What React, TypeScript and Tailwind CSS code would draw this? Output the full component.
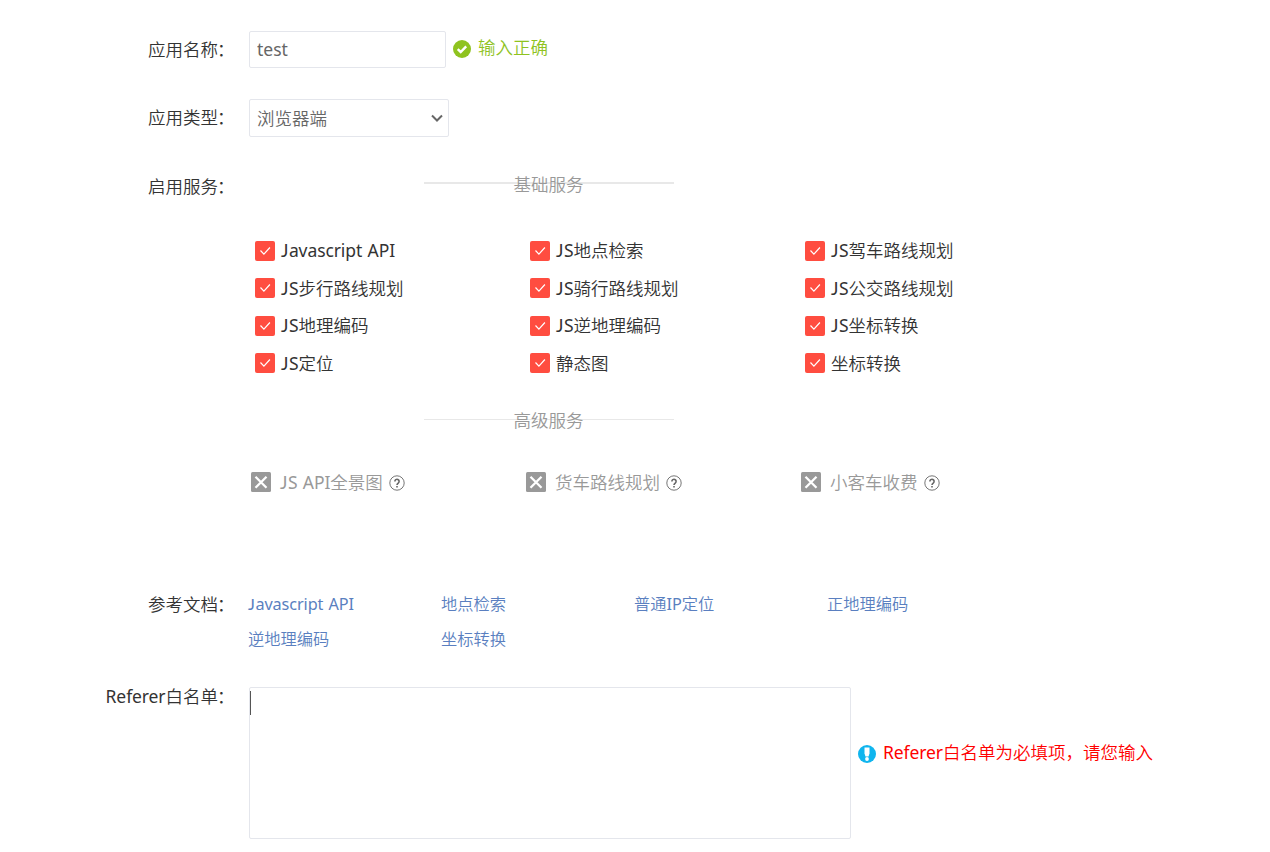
import type { ReactNode } from 'react'
import clsx from 'clsx'

const basicServices = [
    'Javascript API', 'JS地点检索', 'JS驾车路线规划',
    'JS步行路线规划', 'JS骑行路线规划', 'JS公交路线规划',
    'JS地理编码', 'JS逆地理编码', 'JS坐标转换',
    'JS定位', '静态图', '坐标转换',
]

const advancedServices = ['JS API全景图', '货车路线规划', '小客车收费']

const docs = ['Javascript API', '地点检索', '普通IP定位', '正地理编码', '逆地理编码', '坐标转换']

const partClass = (part: string) => {
    // The capital J of Noto Sans drops below the baseline, Lato's does not
    if (part === 'J') return 'mr-[0.5px] font-["Lato",sans-serif] font-normal leading-none'
    if (/[A-Za-z]/.test(part)) return 'font-normal tracking-[-0.1px]'
    return ''
}

function Text({ value }: { value: string }) {
    return (
        <span className={clsx('whitespace-pre', value.includes(' API') && '[word-spacing:1px]')}>
            {value.split(/(J|[A-IK-Za-z ]+)/).filter(Boolean).map((part, i) => (
                <span key={i} className={partClass(part)}>{part}</span>
            ))}
        </span>
    )
}

type RowProps = {
    label: string
    className?: string
    labelClass?: string
    children: ReactNode
}

function Row({ label, className, labelClass, children }: RowProps) {
    return (
        <div className={clsx('flex', className)}>
            <div className={clsx('flex w-[236px] mr-[13px] pr-[0.5px] shrink-0 justify-end leading-[26px]', labelClass)}>
                <Text value={label} />
                <span className='-ml-px mr-px'>：</span>
            </div>
            {children}
        </div>
    )
}

function Divider({ title, thick }: { title: string, thick?: boolean }) {
    return (
        <div className='relative ml-[175px] w-[249px] h-[26px] text-center leading-[26px] text-[#999]'>
            <div className={clsx('absolute left-0 w-[250px] bg-[#e8e8e8]', thick ? 'top-[11px] h-[2px]' : 'top-[12px] h-px')}></div>
            <span className='relative'>{title}</span>
        </div>
    )
}

function Checked() {
    return (
        <svg className='w-5 h-5 shrink-0' viewBox='0 0 20 20' fill='none'>
            <rect width='20' height='20' rx='2' fill='#ff4d40' />
            <path d='M5.5 9.5l3.4 3.6 6-6.6' stroke='#fff' strokeWidth='1.2' />
        </svg>
    )
}

function Disabled() {
    return (
        <svg className='w-5 h-5 shrink-0' viewBox='0 0 20 20' fill='none'>
            <rect width='20' height='20' rx='1.5' fill='#999' />
            <path d='M4.5 4.7l11 11M15.5 4.7l-11 11' stroke='#fff' strokeWidth='2.3' />
        </svg>
    )
}

function Help() {
    return (
        <svg className='w-4 h-4 ml-[6px] mt-px shrink-0' viewBox='0 0 16 16' fill='none' stroke='#666'>
            <circle cx='8' cy='8' r='7.2' strokeWidth='0.9' />
            <path d='M5.9 6.4a2.1 2.1 0 1 1 3.5 1.5C8.5 8.6 8 8.9 8 9.9' strokeWidth='1.6' />
            <path d='M8 11v1.6' strokeWidth='1.6' />
        </svg>
    )
}

function App() {
    return (
        <div
            lang='zh-CN'
            className='w-[1270px] h-[852px] overflow-hidden bg-white pt-[31px] text-[17.5px] font-[350] text-[#333] font-["Noto_Sans","Noto_Sans_CJK_SC",sans-serif]'
        >
            <Row label='应用名称' className='h-[37px]' labelClass='pt-[5px]'>
                <input
                    className='w-[197px] h-[37px] px-[7px] pb-[2px] border border-[#e4e6ec] rounded-xs font-normal text-[#666] outline-none'
                    defaultValue='test'
                />
                <svg className='w-[18px] h-[18px] ml-[7px] mt-[9px]' viewBox='0 0 18 18' fill='none'>
                    <circle cx='9' cy='9' r='9' fill='#8fc31f' />
                    <path d='M4.7 9.2l3 2.8 5.5-5.7' stroke='#fff' strokeWidth='2.4' />
                </svg>
                <span className='ml-[7px] mt-[3px] leading-[26px] text-[#8fc31f]'>输入正确</span>
            </Row>

            <Row label='应用类型' className='h-[38px] mt-[31px]' labelClass='pt-[5px]'>
                <div className='flex items-center justify-between w-[200px] h-[38px] pl-[7px] pr-[5px] border border-[#e4e6ec] rounded-xs text-[#666]'>
                    <span>浏览器端</span>
                    <svg className='w-3 h-3' viewBox='0 0 12 12' fill='none'>
                        <path d='M1 3.5l5 5 5-5' stroke='#666' strokeWidth='2' />
                    </svg>
                </div>
            </Row>

            <Row label='启用服务' className='mt-[34px]' labelClass='pt-[2px]'>
                <div>
                    <Divider title='基础服务' thick />
                    <div className='grid grid-cols-[275px_275px_275px] auto-rows-[37.5px] mt-[35px] ml-[6px]'>
                        {basicServices.map((name) => (
                            <label key={name} className='flex items-center'>
                                <Checked />
                                <span className='ml-[6px] pb-px leading-[26px]'><Text value={name} /></span>
                            </label>
                        ))}
                    </div>
                    <div className='mt-[25px]'>
                        <Divider title='高级服务' />
                    </div>
                    <div className='grid grid-cols-[275px_275px_275px] mt-[36px] ml-[2px] text-[#999]'>
                        {advancedServices.map((name) => (
                            <div key={name} className='flex items-center h-[26px]'>
                                <Disabled />
                                <span className='ml-[9px] leading-[26px]'><Text value={name} /></span>
                                <Help />
                            </div>
                        ))}
                    </div>
                </div>
            </Row>

            <Row label='参考文档' className='mt-[96px]'>
                <div className='grid grid-cols-[193px_193px_193px_193px] auto-rows-[35px] ml-[-1px] text-[16.25px] leading-[26px] text-[#5a7fc0]'>
                    {docs.map((name) => (
                        <a key={name} href='#'><Text value={name} /></a>
                    ))}
                </div>
            </Row>

            <Row label='Referer白名单' className='mt-[26px]' labelClass='mt-[-4px]'>
                <div className='w-[602px] h-[152px] pt-[3px] border border-[#e4e6ec] rounded-xs'>
                    <div className='w-px h-6 bg-[#555]'></div>
                </div>
                <svg className='w-[18px] h-[18px] ml-[7px] mt-[58px]' viewBox='0 0 18 18'>
                    <circle cx='9' cy='9' r='9' fill='#10b5ee' />
                    <path d='M6.5 2.5h5v6l-1 3h-3l-1-3z' fill='#fff' />
                    <circle cx='9' cy='14' r='1.9' fill='#fff' />
                </svg>
                <span className='ml-[7px] mt-[52px] leading-[26px] text-[#f00]'>
                    <Text value='Referer白名单为必填项，请您输入' />
                </span>
            </Row>
        </div>
    )
}

export default App
